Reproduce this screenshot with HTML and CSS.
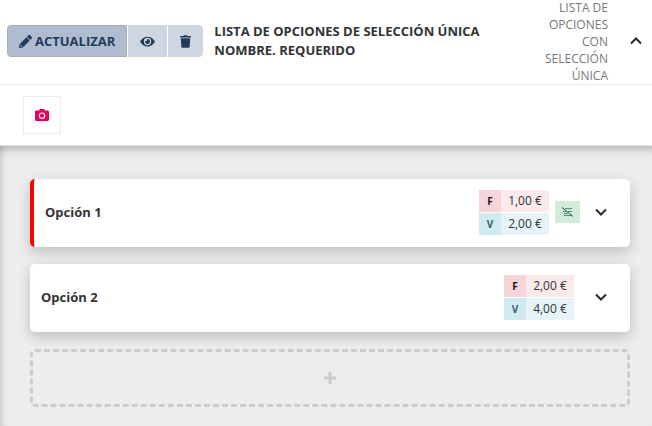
FILE: index.html
```html
<!DOCTYPE html>
<html lang="es">
  <head>
    <meta charset="UTF-8" />
    <meta name="viewport" content="width=device-width, initial-scale=1.0" />
    <title>Lista de opciones</title>
    <link rel="stylesheet" href="styles.css">
  </head>
  <body>
    <!-- Cabecera -->
    <header class="header">
      <div class="btn-group">
        <button type="button" class="btn btn-active">
          <svg class="icon" viewBox="0 0 512 512" width="13" height="13"><path d="M498 142l-46 46c-5 5-13 5-17 0L324 77c-5-5-5-12 0-17l46-46c19-19 49-19 68 0l60 60c19 19 19 49 0 68zM284 100L22 362 0 484c-3 16 12 30 28 28l122-22 262-262c5-5 5-13 0-17L301 100c-4-5-12-5-17 0z"/><path class="cut" d="M88 424h48v36l-64 12-32-31 12-65h36z"/></svg>
          ACTUALIZAR
        </button>
        <button type="button" class="btn" aria-label="Ver">
          <svg class="icon" viewBox="0 0 576 512" width="15" height="13"><path d="M573 241C518 136 411 64 288 64S58 136 3 241a32 32 0 0 0 0 30c55 105 162 177 285 177s230-72 285-177a32 32 0 0 0 0-30zM288 400a144 144 0 1 1 144-144 144 144 0 0 1-144 144zm0-240a95 95 0 0 0-25 4 48 48 0 0 1-67 67 96 96 0 1 0 92-71z"/></svg>
        </button>
        <button type="button" class="btn" aria-label="Eliminar">
          <svg class="icon" viewBox="0 0 448 512" width="11" height="13"><path d="M432 32H312l-9-19a24 24 0 0 0-22-13H167a24 24 0 0 0-22 13l-9 19H16A16 16 0 0 0 0 48v32a16 16 0 0 0 16 16h416a16 16 0 0 0 16-16V48a16 16 0 0 0-16-16zM32 128l21 339a48 48 0 0 0 48 45h246a48 48 0 0 0 48-45l21-339z"/></svg>
        </button>
      </div>
      <h1 class="title">LISTA DE OPCIONES DE SELECCIÓN ÚNICA NOMBRE. REQUERIDO</h1>
      <p class="type">LISTA DE OPCIONES CON SELECCIÓN ÚNICA</p>
      <button type="button" class="toggle" aria-label="Contraer">
        <svg viewBox="0 0 12 8" width="12" height="8"><path d="M1 6.5L6 1.5L11 6.5"/></svg>
      </button>
    </header>

    <!-- Imagen -->
    <div class="toolbar">
      <button type="button" class="btn-photo" aria-label="Foto">
        <svg viewBox="0 0 14 12" width="14" height="12"><path fill-rule="evenodd" d="M4 1.5L5 0h4l1 1.5h2.600a1.400 1.400 0 0 1 1.400 1.400v7.700a1.400 1.400 0 0 1-1.400 1.400H1.400A1.400 1.400 0 0 1 0 10.600V2.900a1.400 1.400 0 0 1 1.400-1.400zM7 3.500a3.200 3.200 0 1 0 0 6.400a3.200 3.200 0 1 0 0-6.400zM7 4.600a2.100 2.100 0 1 1 0 4.200a2.100 2.100 0 1 1 0-4.200z"/></svg>
      </button>
    </div>

    <!-- Opciones -->
    <main class="options">
      <section class="card card-marked">
        <h2 class="card-name">Opción 1</h2>
        <dl class="prices">
          <dt class="tag tag-f">F</dt>
          <dd class="price price-f">1,00 €</dd>
          <dt class="tag tag-v">V</dt>
          <dd class="price price-v">2,00 €</dd>
        </dl>
        <span class="badge">
          <svg viewBox="0 0 12 10" width="12" height="10"><path d="M3 1.500H10M1 4.500H4M6 4.500H10M2 6.500H6M2 8.500H9"/><path class="slash" d="M0 0.500L11 9.500"/></svg>
        </span>
        <button type="button" class="toggle" aria-label="Expandir">
          <svg viewBox="0 0 12 8" width="12" height="8"><path d="M1 1.500L6 6.500L11 1.500"/></svg>
        </button>
      </section>

      <section class="card">
        <h2 class="card-name">Opción 2</h2>
        <dl class="prices">
          <dt class="tag tag-f">F</dt>
          <dd class="price price-f">2,00 €</dd>
          <dt class="tag tag-v">V</dt>
          <dd class="price price-v">4,00 €</dd>
        </dl>
        <button type="button" class="toggle" aria-label="Expandir">
          <svg viewBox="0 0 12 8" width="12" height="8"><path d="M1 1.500L6 6.500L11 1.500"/></svg>
        </button>
      </section>

      <button type="button" class="btn-add" aria-label="Añadir opción">
        <svg viewBox="0 0 12 12" width="12" height="12"><path d="M6 0V12M0 6H12"/></svg>
      </button>
    </main>
  </body>
</html>
```
FILE: styles.css
```css
/* Base */
* {
  box-sizing: border-box;
}
body {
  display: flex;
  flex-direction: column;
  min-height: 100vh;
  margin: 0;
  font-family: "Open Sans", "Noto Sans", sans-serif;
  font-size: 12px;
  color: #333;
  background-color: #fff;
}
h1,
h2,
p,
dl,
dd {
  margin: 0;
}
button {
  font-family: inherit;
  cursor: pointer;
}
/* Cabecera */
.header {
  display: flex;
  align-items: center;
  height: 85px;
  padding: 0 4px 2px 7px;
  border-bottom: 1px solid #ebebeb;
}
.btn-group {
  display: flex;
  gap: 1px;
  flex-shrink: 0;
}
.btn {
  display: flex;
  align-items: center;
  justify-content: center;
  gap: 3px;
  height: 32px;
  padding: 0 11px;
  border: 1px solid #ced6e2;
  background-color: #ced6e2;
  color: #213c5a;
  font-size: 13px;
  font-weight: 700;
}
.btn:first-child {
  border-radius: 4px 0 0 4px;
}
.btn:last-child {
  border-radius: 0 4px 4px 0;
}
.btn-group .btn-active {
  border-color: #a8adb5;
  background-color: #b0bdd0;
}
.icon {
  fill: currentColor;
}
.icon .cut {
  fill: #b0bdd0;
  fill-opacity: 0.6;
}
.title {
  flex: 1;
  padding: 0 40px 0 11px;
  font-size: 13px;
  line-height: 19px;
  font-weight: 700;
}
.type {
  width: 76px;
  font-size: 12px;
  line-height: 17px;
  text-align: right;
  color: #777;
}
.toggle {
  display: flex;
  align-items: center;
  justify-content: center;
  width: 24px;
  height: 24px;
  padding: 0;
  border: none;
  background: none;
}
.toggle path {
  fill: none;
  stroke: #2b2b2b;
  stroke-width: 2;
}
.header .toggle {
  margin-left: 16px;
}
/* Imagen */
.toolbar {
  padding: 11px 23px;
  border-bottom: 1px solid #e4e4e4;
}
.btn-photo {
  display: flex;
  align-items: center;
  justify-content: center;
  width: 38px;
  height: 38px;
  padding: 0;
  border: 1px solid #ebebeb;
  background-color: #fff;
}
.btn-photo path {
  fill: #e4005c;
}
/* Opciones */
.options {
  flex: 1;
  display: flex;
  flex-direction: column;
  gap: 17px;
  padding: 33px 22px 19px 30px;
  background-color: #ededed;
  box-shadow: inset 0 12px 10px -9px rgba(0, 0, 0, 0.25),
    inset 8px 0 8px -8px rgba(0, 0, 0, 0.25);
}
.card {
  display: flex;
  align-items: center;
  min-height: 68px;
  padding: 10px 17px 12px 11px;
  border-radius: 5px;
  background-color: #fff;
  box-shadow: 0 5px 14px rgba(0, 0, 0, 0.2);
}
.card-marked {
  border-left: 4px solid #f00;
}
.card-name {
  flex: 1;
  font-size: 13px;
  line-height: 19px;
  font-weight: 700;
}
.prices {
  display: grid;
  grid-template-columns: 22px 48px;
  row-gap: 1px;
  margin-right: 6px;
}
.tag,
.price {
  height: 22px;
  line-height: 22px;
  text-align: center;
}
.tag {
  font-size: 10px;
  font-weight: 700;
}
.tag-f {
  background-color: #f6d5d9;
  color: #111;
}
.tag-v {
  background-color: #cfeaf0;
  color: #2b6470;
}
.price-f {
  background-color: #fbeaec;
}
.price-v {
  background-color: #e6f4f9;
}
.badge {
  display: flex;
  align-items: center;
  justify-content: center;
  width: 25px;
  height: 22px;
  background-color: #d3ecd9;
}
.badge path {
  fill: none;
  stroke: #5f8f6c;
}
.badge .slash {
  stroke: #1f5130;
}
.card .toggle {
  margin-left: 9px;
}
.btn-add {
  display: flex;
  align-items: center;
  justify-content: center;
  height: 58px;
  border: 3px dashed #ccc;
  border-radius: 5px;
  background: none;
}
.btn-add path {
  fill: none;
  stroke: #ccc;
  stroke-width: 3;
}
```
